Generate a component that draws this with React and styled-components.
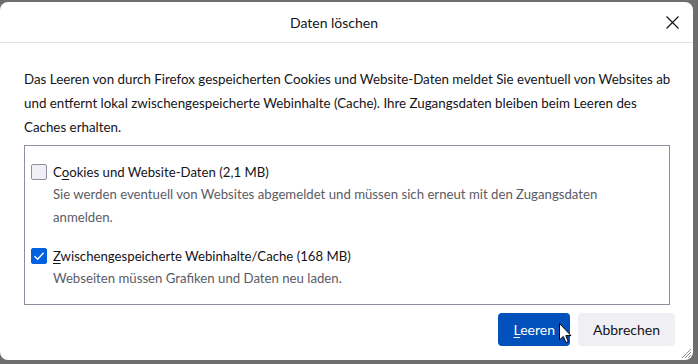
import React from "react";
import styled, { createGlobalStyle } from "styled-components";

const GlobalStyle = createGlobalStyle`
  html, body { margin: 0; padding: 0; }
  body {
    background: #6e6e6e;
    font-family: Lato, "Noto Sans", "Liberation Sans", sans-serif;
  }
`;

const Screen = styled.div`
  width: 698px;
  height: 364px;
  overflow: hidden;
  padding-top: 2px;
  box-sizing: border-box;
`;

const Dialog = styled.div`
  position: relative;
  width: 693px;
  height: 358px;
  background: #ffffff;
  border-radius: 8px;
  display: flex;
  flex-direction: column;
  color: #15141a;
  box-sizing: border-box;
`;

const Header = styled.header`
  flex: none;
  height: 40px;
  display: flex;
  align-items: center;
  padding-left: 8px;
  border-bottom: 1px solid #e0e0e6;
`;

const Title = styled.h1`
  flex: 1;
  margin: 0;
  text-align: center;
  font-size: 14px;
  font-weight: 400;
`;

const CloseButton = styled.button`
  width: 24px;
  height: 24px;
  margin-right: 9px;
  padding: 0;
  border: 0;
  background: none;
  display: flex;
  align-items: center;
  justify-content: center;
  color: #15141a;
`;

const Body = styled.div`
  padding: 24px 23px 0 24px;
`;

const Intro = styled.p`
  margin: 0;
  font-size: 13.35px;
  line-height: 24px;
  white-space: nowrap;
`;

const OptionsBox = styled.div`
  margin-top: 6px;
  border: 1px solid #8f8f9d;
  padding: 15px 6px 14px 6px;
  display: grid;
  grid-template-columns: 16px 1fr;
  column-gap: 6px;
  align-items: center;
`;

const Box = styled.span`
  width: 16px;
  height: 16px;
  box-sizing: border-box;
  border-radius: 2px;
  border: 1px solid ${(p) => (p.$checked ? "#0061e0" : "#8f8f9d")};
  background: ${(p) => (p.$checked ? "#0061e0" : "#f0f0f4")};
  display: flex;
  align-items: center;
  justify-content: center;
`;

const Label = styled.label`
  font-size: 13.2px;
  line-height: 22px;
  white-space: nowrap;
`;

const Desc = styled.div`
  grid-column: 2;
  font-size: 13.2px;
  line-height: 23px;
  color: #5b5b66;
  white-space: nowrap;
  margin-bottom: ${(p) => (p.$last ? "0" : "16px")};
`;

const AccessKey = styled.span`
  text-decoration: underline;
  text-underline-offset: 2px;
`;

const Footer = styled.div`
  display: flex;
  justify-content: flex-end;
  gap: 8px;
  padding: 8px 18px 0 0;
`;

const Button = styled.button`
  height: 33px;
  padding: 0 15px;
  border: 0;
  border-radius: 4px;
  font-family: inherit;
  font-size: 14px;
  background: ${(p) => (p.$primary ? "#0250bb" : "#f0f0f4")};
  color: ${(p) => (p.$primary ? "#ffffff" : "#15141a")};
`;

const Cursor = styled.svg`
  position: absolute;
  left: 559px;
  top: 321px;
`;

const Grip = styled.svg`
  position: absolute;
  right: 1px;
  bottom: 1px;
`;

function Checkbox({ checked }) {
  return (
    <Box $checked={checked}>
      {checked && (
        <svg width="12" height="12" viewBox="0 0 12 12">
          <path d="M1.5 6.2 L4.6 9.2 L10.6 2.8" fill="none" stroke="#fff" strokeWidth="1.4" />
        </svg>
      )}
    </Box>
  );
}

export default function App() {
  return (
    <>
      <GlobalStyle />
      <Screen>
        <Dialog>
          <Header>
            <Title>Daten löschen</Title>
            <CloseButton aria-label="Schließen">
              <svg width="13" height="13" viewBox="0 0 13 13">
                <path d="M0.5 0.5 L12.5 12.5 M12.5 0.5 L0.5 12.5" stroke="#15141a" strokeWidth="1.2" />
              </svg>
            </CloseButton>
          </Header>
          <Body>
            <Intro>
              Das Leeren von durch Firefox gespeicherten Cookies und Website-Daten meldet Sie eventuell von Websites ab
              <br />
              und entfernt lokal zwischengespeicherte Webinhalte (Cache). Ihre Zugangsdaten bleiben beim Leeren des
              <br />
              Caches erhalten.
            </Intro>
            <OptionsBox>
              <Checkbox checked={false} />
              <Label>
                C<AccessKey>o</AccessKey>okies und Website-Daten (2,1 MB)
              </Label>
              <Desc>
                Sie werden eventuell von Websites abgemeldet und müssen sich erneut mit den Zugangsdaten
                <br />
                anmelden.
              </Desc>
              <Checkbox checked />
              <Label>
                <AccessKey>Z</AccessKey>wischengespeicherte Webinhalte/Cache (168 MB)
              </Label>
              <Desc $last>Webseiten müssen Grafiken und Daten neu laden.</Desc>
            </OptionsBox>
          </Body>
          <Footer>
            <Button $primary>
              <AccessKey>L</AccessKey>eeren
            </Button>
            <Button>Abbrechen</Button>
          </Footer>
          <Cursor width="13" height="21" viewBox="0 0 13 21">
            <path d="M0.5 0.5 L0.5 17 L4.3 13.4 L6.9 19.6 L9.3 18.6 L6.8 12.6 L12 12.6 Z" fill="#fff" stroke="#000" strokeWidth="1" strokeLinejoin="round" />
          </Cursor>
          <Grip width="12" height="12" viewBox="0 0 12 12">
            <path d="M11 2 L2 11 M11 5 L5 11 M11 8 L8 11" stroke="#8f8f9d" strokeWidth="1" />
          </Grip>
        </Dialog>
      </Screen>
    </>
  );
}
